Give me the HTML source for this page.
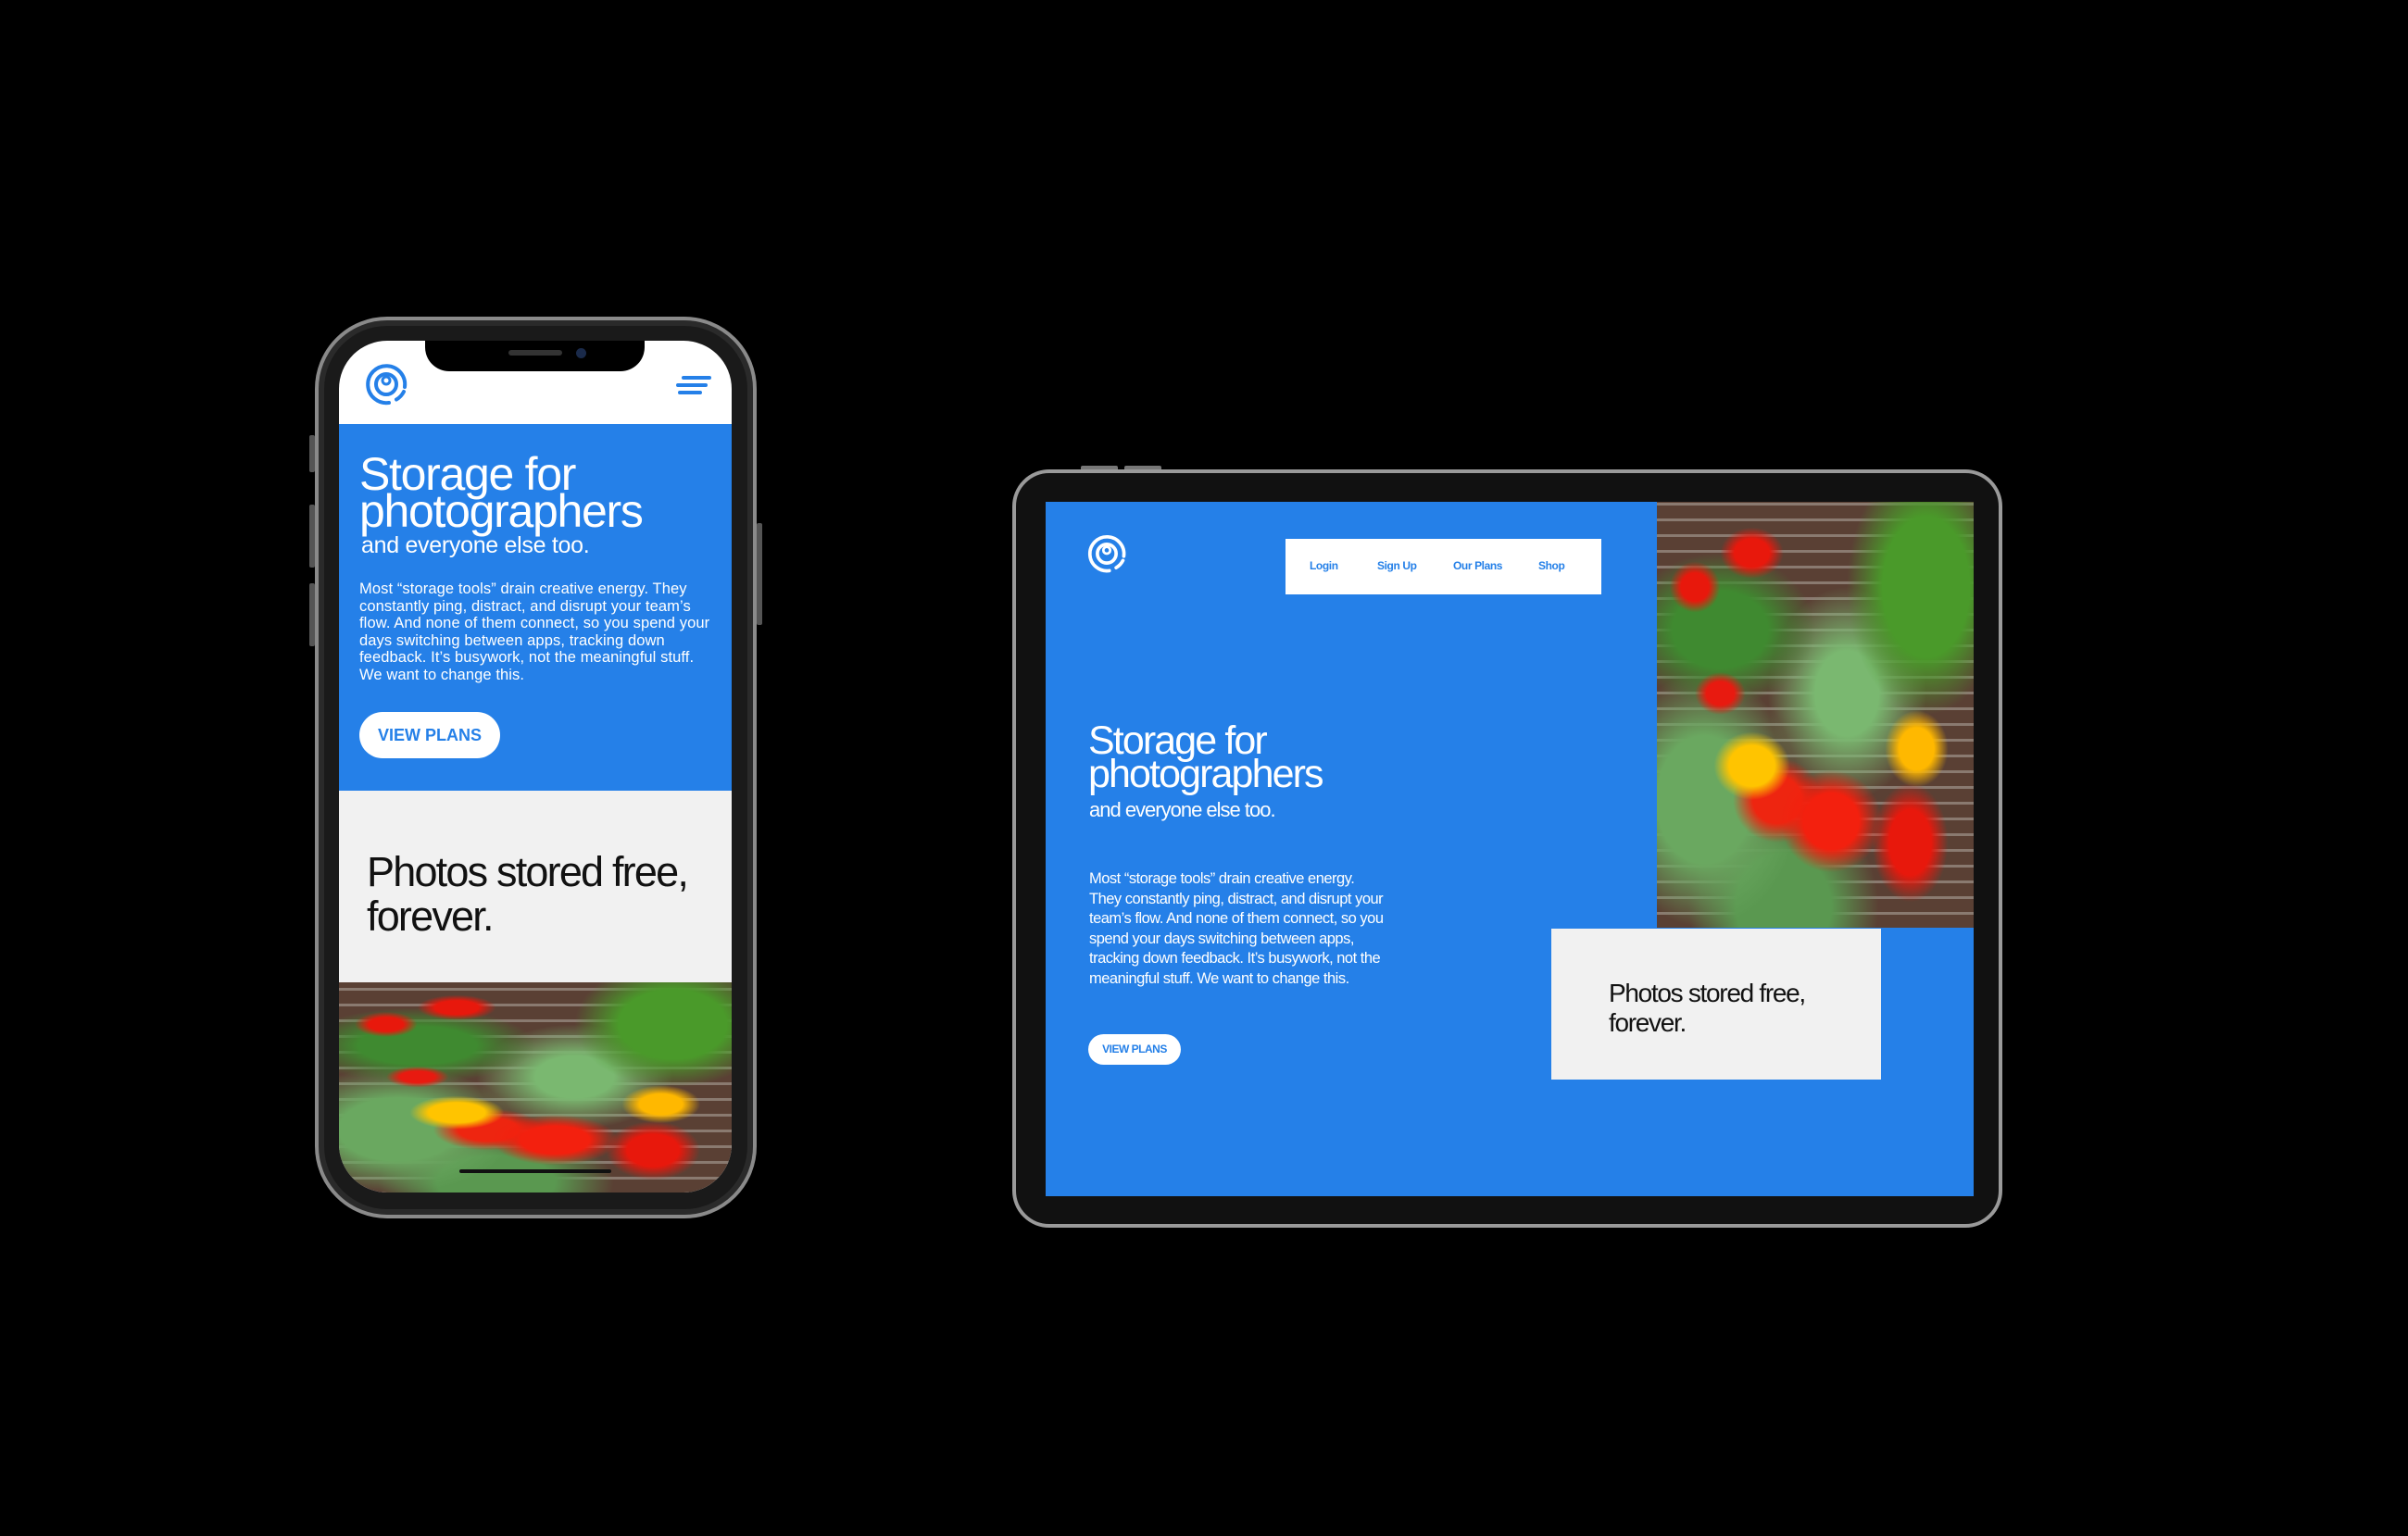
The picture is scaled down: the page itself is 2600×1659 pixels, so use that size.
<!DOCTYPE html>
<html><head><meta charset="utf-8"><style>
*{margin:0;padding:0;box-sizing:border-box}
body{width:2600px;height:1659px;background:#000;position:relative;overflow:hidden;font-family:"Liberation Sans",Arial,sans-serif}
.a{position:absolute}
.photo{overflow:hidden;background:
 repeating-linear-gradient(0deg,#5a4034 0 14px,#8a7a70 14px 17px);}
.photo:before{content:"";position:absolute;inset:0;background:
 radial-gradient(ellipse 12% 8% at 30% 62%,#ffc400 0 60%,transparent 100%),
 radial-gradient(ellipse 10% 9% at 82% 58%,#ffb800 0 55%,transparent 100%),
 radial-gradient(ellipse 16% 12% at 55% 75%,#f3200e 0 55%,transparent 100%),
 radial-gradient(ellipse 12% 14% at 80% 80%,#e8180c 0 55%,transparent 100%),
 radial-gradient(ellipse 14% 10% at 38% 70%,#ee2510 0 55%,transparent 100%),
 radial-gradient(ellipse 10% 6% at 30% 12%,#e8180c 0 55%,transparent 100%),
 radial-gradient(ellipse 8% 6% at 12% 20%,#e8180c 0 55%,transparent 100%),
 radial-gradient(ellipse 8% 5% at 20% 45%,#e81a10 0 55%,transparent 100%),
 radial-gradient(ellipse 25% 30% at 85% 20%,#4a9a2a 0 55%,transparent 100%),
 radial-gradient(ellipse 30% 18% at 20% 30%,#3f8a30 0 50%,transparent 100%),
 radial-gradient(ellipse 30% 30% at 15% 70%,#6aa860 0 50%,transparent 100%),
 radial-gradient(ellipse 25% 25% at 60% 45%,#7ab870 0 40%,transparent 100%),
 radial-gradient(ellipse 30% 25% at 40% 95%,#5a9850 0 50%,transparent 100%);}
</style></head><body>

<!-- PHONE -->
<div class="a" style="left:340px;top:342px;width:477px;height:974px;border-radius:78px;background:#1a1a1a;border:4px solid #8a8a8a;box-shadow:inset 0 0 0 6px #2a2a2a"></div>
<div class="a" style="left:334px;top:470px;width:6px;height:40px;background:#555;border-radius:2px"></div>
<div class="a" style="left:334px;top:545px;width:6px;height:68px;background:#555;border-radius:2px"></div>
<div class="a" style="left:334px;top:630px;width:6px;height:68px;background:#555;border-radius:2px"></div>
<div class="a" style="left:817px;top:565px;width:6px;height:110px;background:#555;border-radius:2px"></div>
<div class="a" style="left:366px;top:368px;width:424px;height:920px;border-radius:52px;overflow:hidden;background:#fff">
  <div class="a" style="left:0;top:90px;width:424px;height:396px;background:#2580e8"></div>
  <div class="a" style="left:0;top:486px;width:424px;height:207px;background:#f1f1f1"></div>
  <div class="a photo" style="left:0;top:693px;width:424px;height:227px"></div>
  <div class="a" style="left:130px;top:895px;width:164px;height:4px;background:#111;border-radius:2px"></div>
  <svg class="a" style="left:26px;top:22px" width="50" height="50" viewBox="0 0 50 50" fill="none" stroke="#2580e8" stroke-width="4" stroke-linecap="round">
    <path d="M28 45 A20 20 0 1 1 45 28"/><path d="M44 33 A20 20 0 0 1 36 41.5"/>
    <circle cx="25" cy="25" r="11"/><circle cx="25" cy="21" r="4" stroke-width="3"/>
  </svg>
  <svg class="a" style="left:362px;top:36px" width="42" height="26" stroke="#2580e8" stroke-width="4" stroke-linecap="round"><path d="M10 4H38M4 12H34M6 20H28"/></svg>
  <div class="a" style="left:22px;top:124px;color:#fff;font-size:50px;line-height:40px;letter-spacing:-1.3px">Storage for<br>photographers</div>
  <div class="a" style="left:24px;top:207px;color:#fff;font-size:25px;letter-spacing:-0.3px">and everyone else too.</div>
  <div class="a" style="left:22px;top:259px;width:385px;color:#fff;font-size:16.5px;line-height:18.5px;letter-spacing:0.1px">Most “storage tools” drain creative energy. They constantly ping, distract, and disrupt your team’s flow. And none of them connect, so you spend your days switching between apps, tracking down feedback. It’s busywork, not the meaningful stuff. We want to change this.</div>
  <div class="a" style="left:22px;top:401px;width:152px;height:50px;border-radius:25px;background:#fff;color:#2580e8;font-weight:bold;font-size:18px;line-height:50px;text-align:center">VIEW PLANS</div>
  <div class="a" style="left:30px;top:550px;color:#111;font-size:45px;line-height:48px;letter-spacing:-1.8px">Photos stored free,<br>forever.</div>
  <div class="a" style="left:93px;top:-4px;width:237px;height:37px;background:#000;border-radius:0 0 26px 26px"></div>
  <div class="a" style="left:183px;top:10px;width:58px;height:6px;background:#333;border-radius:3px"></div>
  <div class="a" style="left:256px;top:8px;width:11px;height:11px;background:#1a2a4a;border-radius:50%"></div>
</div>

<!-- TABLET -->
<div class="a" style="left:1167px;top:503px;width:40px;height:6px;background:#777;border-radius:2px"></div>
<div class="a" style="left:1214px;top:503px;width:40px;height:6px;background:#777;border-radius:2px"></div>
<div class="a" style="left:1093px;top:507px;width:1069px;height:819px;border-radius:40px;background:#111;border:4px solid #9a9a9a"></div>
<div class="a" style="left:1129px;top:542px;width:1002px;height:750px;background:#2580e8;overflow:hidden">
  <div class="a photo" style="left:660px;top:0;width:342px;height:460px"></div>
  <div class="a" style="left:546px;top:461px;width:356px;height:163px;background:#f1f1f1"></div>
  <div class="a" style="left:608px;top:515px;color:#111;font-size:28px;line-height:32px;letter-spacing:-1.3px">Photos stored free,<br>forever.</div>
  <div class="a" style="left:259px;top:40px;width:341px;height:60px;background:#fff;color:#2580e8;font-size:12px;font-weight:bold;letter-spacing:-0.4px">
    <span class="a" style="left:26px;top:22px">Login</span><span class="a" style="left:99px;top:22px">Sign Up</span><span class="a" style="left:181px;top:22px">Our Plans</span><span class="a" style="left:273px;top:22px">Shop</span>
  </div>
  <svg class="a" style="left:43px;top:33px" width="46" height="46" viewBox="0 0 50 50" fill="none" stroke="#fff" stroke-width="4" stroke-linecap="round">
    <path d="M28 45 A20 20 0 1 1 45 28"/><path d="M44 33 A20 20 0 0 1 36 41.5"/>
    <circle cx="25" cy="25" r="11"/><circle cx="25" cy="21" r="4" stroke-width="3"/>
  </svg>
  <div class="a" style="left:46px;top:240px;color:#fff;font-size:43px;line-height:36px;letter-spacing:-1.9px">Storage for<br>photographers</div>
  <div class="a" style="left:47px;top:320px;color:#fff;font-size:22px;letter-spacing:-1px">and everyone else too.</div>
  <div class="a" style="left:47px;top:397px;width:345px;color:#fff;font-size:16.5px;line-height:21.5px;letter-spacing:-0.5px">Most “storage tools” drain creative energy.<br>They constantly ping, distract, and disrupt your<br>team’s flow. And none of them connect, so you<br>spend your days switching between apps,<br>tracking down feedback. It’s busywork, not the<br>meaningful stuff. We want to change this.</div>
  <div class="a" style="left:46px;top:575px;width:100px;height:33px;border-radius:17px;background:#fff;color:#2580e8;font-weight:bold;font-size:12px;line-height:33px;text-align:center;letter-spacing:-0.5px">VIEW PLANS</div>
</div>
</body></html>
